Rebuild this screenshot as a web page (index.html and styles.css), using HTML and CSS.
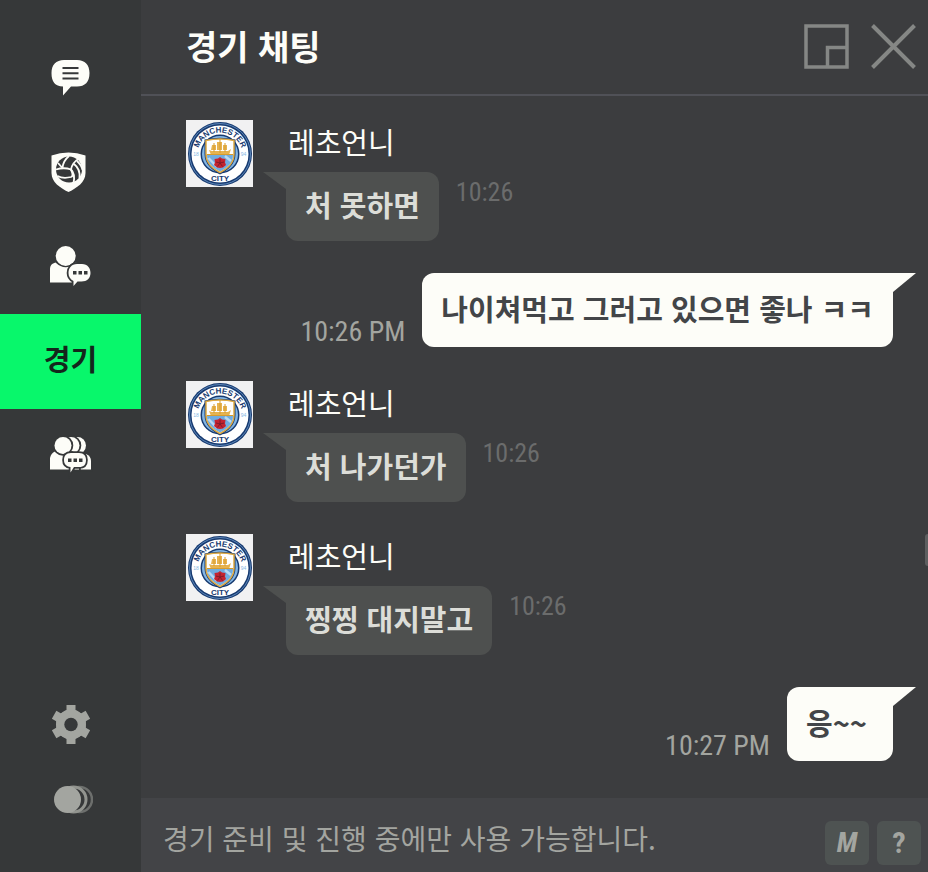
FILE: index.html
```
<!DOCTYPE html>
<html lang="ko">
<head>
    <meta charset="UTF-8">
    <meta name="viewport" content="width=device-width, initial-scale=1">
    <title>경기 채팅</title>
    <link rel="stylesheet" href="styles.css">
</head>
<body>
    <!-- Club crest, shared by every avatar -->
    <svg class="defs" aria-hidden="true">
        <symbol id="crest" viewBox="0 0 67 67">
            <path id="arc-top" d="M11.500 35 A22.500 22.500 0 0 1 56.500 35" fill="none"/>
            <rect width="67" height="67" fill="#f1f1f2"/>
            <circle cx="34" cy="34" r="32" fill="#173a70"/>
            <circle cx="34" cy="34" r="30.500" fill="none" stroke="#6f9acb" stroke-width=".8"/>
            <circle cx="34" cy="34" r="28.500" fill="#fff"/>
            <circle cx="34" cy="34" r="19.500" fill="#173a70"/>
            <circle cx="34" cy="34" r="18" fill="#84b6e4"/>
            <path d="M18.500 19.500 Q34 16 49.500 19.500 V34 C49.500 44 42 50 34 54.500 C26 50 18.500 44 18.500 34 Z" fill="#173a70"/>
            <path d="M20 20.500 Q34 17.500 48 20.500 V34 C48 43 41 49 34 52.500 C27 49 20 43 20 34 Z" fill="#fff" stroke="#e0aa42" stroke-width="1.500"/>
            <path d="M21 35 H47 C47 43 41 48 34 51.500 C27 48 21 43 21 35 Z" fill="#70ace0"/>
            <path d="M22.500 38 L31 47 M39 36 L45 41" stroke="#b9d9f2" stroke-width="2.500"/>
            <path d="M23 30 L26 31 H42 L45 29 L43 35 H25 Z M26 25 H30 V30 H25 Z M31 22 H36 V30 H31 Z M37 25 H41 V30 H37 Z" fill="#e6b350"/>
            <path d="M34 19 V33 M28 23 V32 M39 23 V32 M21 34.500 H47" stroke="#d79c2e" stroke-width="1"/>
            <path d="M34 37 L36 38.500 L39.500 39 L39 42.500 L40 45 L37 47.500 L34 48 L31 47.500 L28 45 L29 42.500 L28.500 39 L32 38.500 Z" fill="#c4232f"/>
            <path d="M34 39 V43 L30 42 M34 43 L38 42 M34 43 L31.500 46.500 M34 43 L36.500 46.500" fill="none" stroke="#6d1a2b" stroke-width=".8"/>
            <text class="crest-name"><textPath href="#arc-top" startOffset="50%">MANCHESTER</textPath></text>
            <text class="crest-name" x="34" y="61">CITY</text>
            <text class="crest-year" x="10" y="36">18</text>
            <text class="crest-year" x="57.500" y="36">94</text>
        </symbol>
    </svg>

    <div class="app">
        <nav class="sidebar" aria-label="채팅 메뉴">
            <div class="tabs">
                <button class="tab" aria-label="전체 채팅">
                    <svg class="icon" viewBox="0 0 45 45">
                        <path fill="#fdfdf8" d="M16 6 H29 C37 6 41.500 11 41.500 19 C41.500 28 37 32.500 29 32.500 H23 Q19 37 15 41.500 V32.500 C7 32 3.500 28 3.500 19 C3.500 11 8 6 16 6 Z"/>
                        <path stroke="#363839" stroke-width="2" d="M14.500 14 H30.500 M14.500 19.300 H30.500 M14.500 24.600 H30.500"/>
                    </svg>
                </button>
                <button class="tab" aria-label="클럽">
                    <svg class="icon" viewBox="0 0 45 45">
                        <path fill="#fdfdf8" d="M3.500 6.500 Q20.500 .5 37.500 6.500 V24 C37.500 33 29 39 20.500 43 C12 39 3.500 33 3.500 24 Z"/>
                        <circle cx="21" cy="20.500" r="13" fill="#363839"/>
                        <g fill="none" stroke="#fdfdf8" stroke-width="1.800">
                            <path d="M8 20.500 Q16 18 23 20.500 Q24 14 31 9.500"/>
                            <path d="M14.500 19 Q15 12 21 7 M10 14 L14.500 19"/>
                            <path d="M23 20.500 Q27.500 25 25.500 34 M26 15 Q32.500 20 31.500 29 M29 12 Q33.500 16 34.500 21"/>
                            <path d="M23 20.500 Q26 27 23 28 Q15 30 9.500 27"/>
                        </g>
                    </svg>
                </button>
                <button class="tab" aria-label="개인 채팅">
                    <svg class="icon" viewBox="0 0 45 45">
                        <path fill="#fdfdf8" d="M2 38.500 V26 C2 21 4 19.500 7.500 18.500 Q17.500 28 28 18.500 L32 22 V38.500 Z"/>
                        <circle cx="17.700" cy="12" r="10" fill="#fdfdf8"/>
                        <path fill="#fdfdf8" stroke="#363839" stroke-width="3.600" paint-order="stroke" d="M29 20 H34 C39.500 20 42.500 24 42.500 29 C42.500 34 39 37.500 33.500 37.500 H29.500 L25.500 42 V37 C22 35 20.500 32.500 20.500 29 C20.500 24 23.500 20 29 20 Z"/>
                        <path fill="#363839" d="M25 27 h3.500 v3.500 h-3.500 Z M30.500 27 h3.500 v3.500 h-3.500 Z M36 27 h3.500 v3.500 h-3.500 Z"/>
                    </svg>
                </button>
                <button class="tab active">경기</button>
                <button class="tab" aria-label="그룹 채팅">
                    <svg class="icon" viewBox="0 0 45 45">
                        <g fill="#fdfdf8" stroke="#363839" stroke-width="3.600" paint-order="stroke">
                            <path d="M29 35.500 V20 H38 Q43 22 43 27 V35.500 Z"/>
                            <circle cx="29.500" cy="11.500" r="8.500"/>
                            <circle cx="23" cy="11.500" r="8.500"/>
                            <path d="M2 35.500 V24 Q3 19 7 17.500 L24 19 L31 24 V35.500 Z"/>
                            <circle cx="15" cy="11.500" r="8.500"/>
                        </g>
                        <path fill="#fdfdf8" stroke="#363839" stroke-width="3.600" paint-order="stroke" d="M23 19 H31 C36 19 38 22 38 26 C38 30.500 36 33 31 33 H26 L22.500 38.500 V33 C18 32.500 16 30 16 26 C16 22 18 19 23 19 Z"/>
                        <path fill="#363839" d="M20 24.500 h3.500 v3.500 h-3.500 Z M25.500 24.500 h3.500 v3.500 h-3.500 Z M31 24.500 h3.500 v3.500 h-3.500 Z"/>
                    </svg>
                </button>
            </div>
            <div class="tools">
                <button class="tool" aria-label="설정">
                    <svg class="icon" viewBox="0 0 45 45">
                        <g fill="#a3a5a0">
                            <path id="teeth" d="M18.500 3 H27.500 V8 L30 10 V35 L27.500 37 V42 H18.500 V37 L16 35 V10 L18.500 8 Z"/>
                            <use href="#teeth" transform="rotate(60 23 22.500)"/>
                            <use href="#teeth" transform="rotate(120 23 22.500)"/>
                            <circle cx="23" cy="22.500" r="15"/>
                        </g>
                        <circle cx="23" cy="22.500" r="6.700" fill="#363839"/>
                    </svg>
                </button>
                <button class="tool" aria-label="투명도">
                    <svg class="icon" viewBox="0 0 45 45">
                        <circle cx="31.500" cy="22.500" r="12.500" fill="#363839" stroke="#6d6f6d" stroke-width="2.500"/>
                        <circle cx="25.500" cy="22.500" r="12.500" fill="#363839" stroke="#92948f" stroke-width="3"/>
                        <circle cx="19.500" cy="22.500" r="13.500" fill="#a3a5a0"/>
                    </svg>
                </button>
            </div>
        </nav>

        <main class="chat">
            <header class="chat-header">
                <h1>경기 채팅</h1>
                <button class="window-btn" aria-label="작게 보기">
                    <svg class="icon" viewBox="0 0 45 45">
                        <path fill="none" stroke="#858785" stroke-width="3.500" d="M2 2 H43 V43 H2 Z M23.500 43 V23.500 H43"/>
                    </svg>
                </button>
                <button class="window-btn" aria-label="닫기">
                    <svg class="icon" viewBox="0 0 45 45">
                        <path stroke="#858785" stroke-width="4" d="M1.500 1.500 L43.500 43.500 M43.500 1.500 L1.500 43.500"/>
                    </svg>
                </button>
            </header>

            <div class="messages">
                <article class="message">
                    <svg class="avatar" role="img" aria-label="Manchester City"><use href="#crest"/></svg>
                    <div class="content">
                        <div class="name">레초언니</div>
                        <div class="line">
                            <p class="bubble">처 못하면</p>
                            <time>10:26</time>
                        </div>
                    </div>
                </article>
                <article class="message mine">
                    <time>10:26 PM</time>
                    <p class="bubble">나이쳐먹고 그러고 있으면 좋나 ㅋㅋ</p>
                </article>
                <article class="message">
                    <svg class="avatar" role="img" aria-label="Manchester City"><use href="#crest"/></svg>
                    <div class="content">
                        <div class="name">레초언니</div>
                        <div class="line">
                            <p class="bubble">처 나가던가</p>
                            <time>10:26</time>
                        </div>
                    </div>
                </article>
                <article class="message">
                    <svg class="avatar" role="img" aria-label="Manchester City"><use href="#crest"/></svg>
                    <div class="content">
                        <div class="name">레초언니</div>
                        <div class="line">
                            <p class="bubble">찡찡 대지말고</p>
                            <time>10:26</time>
                        </div>
                    </div>
                </article>
                <article class="message mine">
                    <time>10:27 PM</time>
                    <p class="bubble">응~~</p>
                </article>
                <span class="scroll-thumb"></span>
            </div>

            <form class="composer">
                <input type="text" aria-label="메시지" placeholder="경기 준비 및 진행 중에만 사용 가능합니다." disabled>
                <button type="button" class="key key-macro">M</button>
                <button type="button" class="key">?</button>
            </form>
        </main>
    </div>
</body>
</html>
```
FILE: styles.css
```
* {
    box-sizing: border-box;
}
body {
    margin: 0;
    background-color: #3c3d3f;
    font-family: "Noto Sans CJK KR", sans-serif;
    font-size: 29px;
    line-height: 40px;
}
button {
    padding: 0;
    border: 0;
    background: none;
    font: inherit;
    cursor: pointer;
}
h1, p {
    margin: 0;
}
.defs {
    position: absolute;
    width: 67px;
    height: 67px;
    visibility: hidden;
}
.app {
    display: flex;
    min-height: 100vh;
}
.icon {
    display: block;
    width: 45px;
    height: 45px;
}

/* Sidebar */
.sidebar {
    display: flex;
    flex-direction: column;
    justify-content: space-between;
    flex: 0 0 141px;
    padding: 29px 0 35px;
    background-color: #363839;
}
.tabs, .tools {
    display: flex;
    flex-direction: column;
}
.tab, .tool {
    display: flex;
    align-items: center;
    justify-content: center;
    height: 95px;
}
.tool {
    height: 75px;
}
.tab.active {
    padding-bottom: 8px;
    background-color: #08f76b;
    color: #14261c;
    font-weight: bold;
}

/* Chat */
.chat {
    display: flex;
    flex-direction: column;
    flex: 1;
    min-width: 0;
}
.chat-header {
    display: flex;
    align-items: center;
    gap: 22px;
    height: 96px;
    padding: 0 12px 2px 45px;
    border-bottom: 2px solid #505157;
}
.chat-header h1 {
    flex: 1;
    color: #fdfdf8;
    font-size: 34px;
}
.messages {
    position: relative;
    display: flex;
    flex-direction: column;
    flex: 1;
    gap: 32px;
    padding: 24px 35px 32px 45px;
}
.message {
    display: flex;
}
.avatar {
    flex: none;
    width: 67px;
    height: 67px;
    margin-right: 33px;
}
.crest-name {
    fill: #173a70;
    font-family: "Liberation Sans", sans-serif;
    font-size: 8px;
    font-weight: bold;
    text-anchor: middle;
}
.crest-year {
    fill: #84b6e4;
    font-family: "Liberation Sans", sans-serif;
    font-size: 5px;
    text-anchor: middle;
}
.name {
    padding: 1px 0 11px 2px;
    color: #fdfdf8;
}
.line {
    display: flex;
    gap: 17px;
}
.bubble {
    position: relative;
    padding: 12px 19px 17px;
    border-radius: 0 12px 12px 12px;
    background-color: #4e504f;
    color: #dcddd8;
    font-weight: bold;
}
.bubble::before {
    content: "";
    position: absolute;
    top: 0;
    right: 100%;
    width: 23px;
    height: 17px;
    background-color: inherit;
    clip-path: polygon(0 0, 100% 0, 100% 100%);
}
time {
    color: #6b6c6c;
    font-family: "Roboto Condensed", "Liberation Sans", sans-serif;
    font-size: 26px;
}
.mine {
    align-items: flex-end;
    justify-content: flex-end;
    gap: 17px;
    padding-bottom: 2px;
}
.mine .bubble {
    min-width: 106px;
    padding: 15px 19px 19px;
    border-radius: 12px 0 12px 12px;
    background-color: #fdfdf8;
    color: #434548;
}
.mine .bubble::before {
    right: auto;
    left: 100%;
    height: 19px;
    clip-path: polygon(0 0, 100% 0, 0 100%);
}
.mine time {
    color: #a3a5a0;
    font-size: 28px;
    line-height: 30px;
}
.scroll-thumb {
    position: absolute;
    top: 438px;
    right: 0;
    width: 3px;
    height: 32px;
    border-radius: 3px 0 0 3px;
    background-color: #5e5f60;
}

/* Composer */
.composer {
    display: flex;
    align-items: center;
    gap: 8px;
    padding: 23px 7px 7px 22px;
    background-color: #434447;
}
.composer input {
    flex: 1;
    min-width: 0;
    height: 44px;
    padding: 0 0 10px;
    border: 0;
    background: none;
    font: inherit;
    font-size: 28px;
}
.composer input::placeholder {
    color: #a3a5a0;
    opacity: 1;
}
.key {
    width: 44px;
    height: 44px;
    border-radius: 6px;
    background-color: #4e5352;
    color: #a3a5a0;
    font-family: "Roboto Condensed", "Liberation Sans", sans-serif;
    font-size: 30px;
    font-weight: bold;
}
.key-macro {
    font-size: 28px;
    font-style: italic;
}
```
